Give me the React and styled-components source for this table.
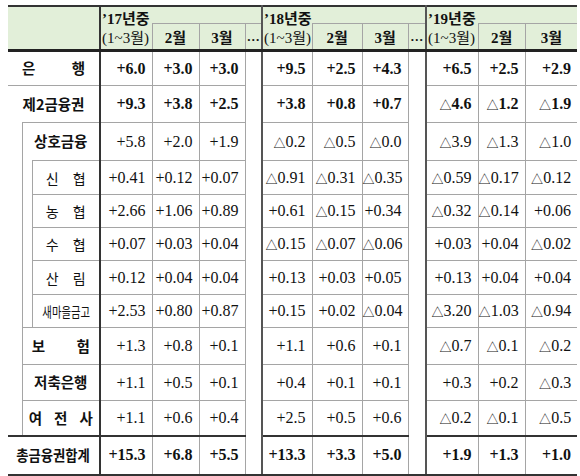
import React from 'react';
import styled, { createGlobalStyle } from 'styled-components';

const GlobalStyle = createGlobalStyle`
  body {
    margin: 0;
    background: #fff;
    font-family: "Liberation Serif", "Noto Sans CJK KR", serif;
  }
`;

const Page = styled.div`
  padding: 5px 0 0 8px;
`;

const Table = styled.table`
  border-collapse: collapse;
  table-layout: fixed;
  width: 569px;
  color: #111;
  font-family: "Liberation Serif", "Noto Sans CJK KR", serif;
  border-top: 2px solid #333;
`;

const Row = styled.tr`
  height: ${(p) => p.$h}px;
`;

// 머리글 영역
const HeadCorner = styled.td`
  padding: 0;
  background: #e2efd9;
  border-right: 2px solid #333;
  border-bottom: 3px solid #222;
`;

const HeadYear = styled.td`
  padding: 0 0 0 1px;
  background: #e2efd9;
  border-left: 2px solid #555;
  font-size: 15px;
  font-weight: 700;
  line-height: 16px;
  white-space: nowrap;
  vertical-align: top;
  & > span {
    display: inline-block;
    transform: translateY(4px);
  }
`;

const HeadSub = styled.td`
  padding: 0 0 0 ${(p) => (p.$first ? 1 : 0)}px;
  background: #e2efd9;
  border-left: ${(p) => (p.$first ? '2px solid #555' : '1px solid #a5a5a5')};
  border-top: ${(p) => (p.$first ? 'none' : '1px solid #a5a5a5')};
  border-bottom: 3px solid #222;
  font-size: ${(p) => (p.$dots ? 13 : 15)}px;
  font-weight: ${(p) => (p.$first ? 400 : 700)};
  text-align: ${(p) => (p.$first ? 'left' : 'center')};
  white-space: nowrap;
  vertical-align: middle;
`;

// 왼쪽 항목 영역
const LabelCell = styled.td`
  padding: 0;
  text-align: center;
  vertical-align: middle;
  font-family: "Noto Sans CJK KR", sans-serif;
  font-size: ${(p) => (p.$level === 2 ? 14 : 14.5)}px;
  font-weight: ${(p) => (p.$level === 2 ? 400 : 700)};
  line-height: 1;
  white-space: nowrap;
  border-right: 2px solid #333;
  border-top: ${(p) => (p.$total ? '2px solid #333' : p.$top ? '1px solid #a5a5a5' : 'none')};
  border-bottom: ${(p) =>
    p.$total ? '2px solid #333' : p.$open ? 'none' : '1px solid #a5a5a5'};
`;

const Indent = styled.td`
  padding: 0;
  border-right: 1px solid #a5a5a5;
`;

const Spread = styled.span`
  display: flex;
  justify-content: space-between;
  width: ${(p) => p.$w}px;
  margin: 0 auto;
`;

const Squeeze = styled.span`
  display: inline-block;
  transform: scaleX(${(p) => p.$s});
`;

// 수치 영역
const Num = styled.td`
  padding: 0 6px 0 0;
  text-align: right;
  vertical-align: middle;
  font-size: 16px;
  font-weight: ${(p) => (p.$bold ? 700 : 400)};
  white-space: nowrap;
  border-left: ${(p) => (p.$first ? '2px solid #555' : '1px solid #a5a5a5')};
  border-top: ${(p) => (p.$total ? '2px solid #333' : 'none')};
  border-bottom: ${(p) => (p.$total ? '2px solid #333' : '1px solid #a5a5a5')};
`;

const Gap = styled.td`
  padding: 0;
  border-left: 1px solid #a5a5a5;
  border-bottom: 2px solid #333;
`;

const Delta = styled.span`
  font-family: "Noto Sans CJK KR", sans-serif;
  font-size: 12px;
  font-weight: 400;
  position: relative;
  top: 1px;
`;

const groups = [
  { year: '’17년중', gap: true },
  { year: '’18년중', gap: true },
  { year: '’19년중', gap: false },
];

const rows = [
  { label: '은행', level: 0, spread: 63, bold: true, h: 35,
    v: ['+6.0', '+3.0', '+3.0', '+9.5', '+2.5', '+4.3', '+6.5', '+2.5', '+2.9'] },
  { label: '제2금융권', level: 0, bold: true, h: 37, open: true,
    v: ['+9.3', '+3.8', '+2.5', '+3.8', '+0.8', '+0.7', '△4.6', '△1.2', '△1.9'] },
  { label: '상호금융', level: 1, h: 38, indent: 9, open: true, top: true,
    v: ['+5.8', '+2.0', '+1.9', '△0.2', '△0.5', '△0.0', '△3.9', '△1.3', '△1.0'] },
  { label: '신협', level: 2, spread: 40, h: 34, indent: 5, top: true,
    v: ['+0.41', '+0.12', '+0.07', '△0.91', '△0.31', '△0.35', '△0.59', '△0.17', '△0.12'] },
  { label: '농협', level: 2, spread: 40, h: 33,
    v: ['+2.66', '+1.06', '+0.89', '+0.61', '△0.15', '+0.34', '△0.32', '△0.14', '+0.06'] },
  { label: '수협', level: 2, spread: 40, h: 33,
    v: ['+0.07', '+0.03', '+0.04', '△0.15', '△0.07', '△0.06', '+0.03', '+0.04', '△0.02'] },
  { label: '산림', level: 2, spread: 40, h: 34,
    v: ['+0.12', '+0.04', '+0.04', '+0.13', '+0.03', '+0.05', '+0.13', '+0.04', '+0.04'] },
  { label: '새마을금고', level: 2, squeeze: 0.74, h: 33,
    v: ['+2.53', '+0.80', '+0.87', '+0.15', '+0.02', '△0.04', '△3.20', '△1.03', '△0.94'] },
  { label: '보험', level: 1, spread: 58, h: 37, top: true,
    v: ['+1.3', '+0.8', '+0.1', '+1.1', '+0.6', '+0.1', '△0.7', '△0.1', '△0.2'] },
  { label: '저축은행', level: 1, h: 36,
    v: ['+1.1', '+0.5', '+0.1', '+0.4', '+0.1', '+0.1', '+0.3', '+0.2', '△0.3'] },
  { label: '여전사', level: 1, spread: 64, h: 35,
    v: ['+1.1', '+0.6', '+0.4', '+2.5', '+0.5', '+0.6', '△0.2', '△0.1', '△0.5'] },
  { label: '총금융권합계', level: 0, squeeze: 0.92, bold: true, total: true, h: 39,
    v: ['+15.3', '+6.8', '+5.5', '+13.3', '+3.3', '+5.0', '+1.9', '+1.3', '+1.0'] },
];

const colWidths = [14, 10, 68, 52, 47, 46, 17, 50, 50, 46, 18, 52, 47, 52];

function Value({ text }) {
  if (text.startsWith('△')) {
    return (
      <>
        <Delta>△</Delta>
        {text.slice(1)}
      </>
    );
  }
  return text;
}

function LabelText({ row }) {
  if (row.spread) {
    return (
      <Spread $w={row.spread}>
        {[...row.label].map((ch, i) => <span key={i}>{ch}</span>)}
      </Spread>
    );
  }
  if (row.squeeze) return <Squeeze $s={row.squeeze}>{row.label}</Squeeze>;
  return row.label;
}

function App() {
  return (
    <Page>
      <GlobalStyle />
      <Table>
        <colgroup>
          {colWidths.map((w, i) => <col key={i} style={{ width: w }} />)}
        </colgroup>
        <tbody>
          <Row $h={16}>
            <HeadCorner colSpan={3} rowSpan={2} />
            {groups.map((g) => (
              <HeadYear key={g.year} colSpan={g.gap ? 4 : 3}>
                <span>{g.year}</span>
              </HeadYear>
            ))}
          </Row>
          <Row $h={27}>
            {groups.map((g) => (
              <React.Fragment key={g.year}>
                <HeadSub $first>(1~3월)</HeadSub>
                <HeadSub>2월</HeadSub>
                <HeadSub>3월</HeadSub>
                {g.gap && <HeadSub $dots>…</HeadSub>}
              </React.Fragment>
            ))}
          </Row>
          {rows.map((r, i) => (
            <Row key={r.label} $h={r.h}>
              {r.indent === 9 && <Indent rowSpan={9} />}
              {r.indent === 5 && <Indent rowSpan={5} />}
              <LabelCell
                colSpan={3 - r.level}
                $level={r.level}
                $total={r.total}
                $open={r.open}
                $top={r.top}
              >
                <LabelText row={r} />
              </LabelCell>
              {groups.map((g, gi) => (
                <React.Fragment key={g.year}>
                  {r.v.slice(gi * 3, gi * 3 + 3).map((val, k) => (
                    <Num key={k} $first={k === 0} $bold={r.bold} $total={r.total}>
                      <Value text={val} />
                    </Num>
                  ))}
                  {g.gap && i === 0 && <Gap rowSpan={rows.length} />}
                </React.Fragment>
              ))}
            </Row>
          ))}
        </tbody>
      </Table>
    </Page>
  );
}

export default App;
